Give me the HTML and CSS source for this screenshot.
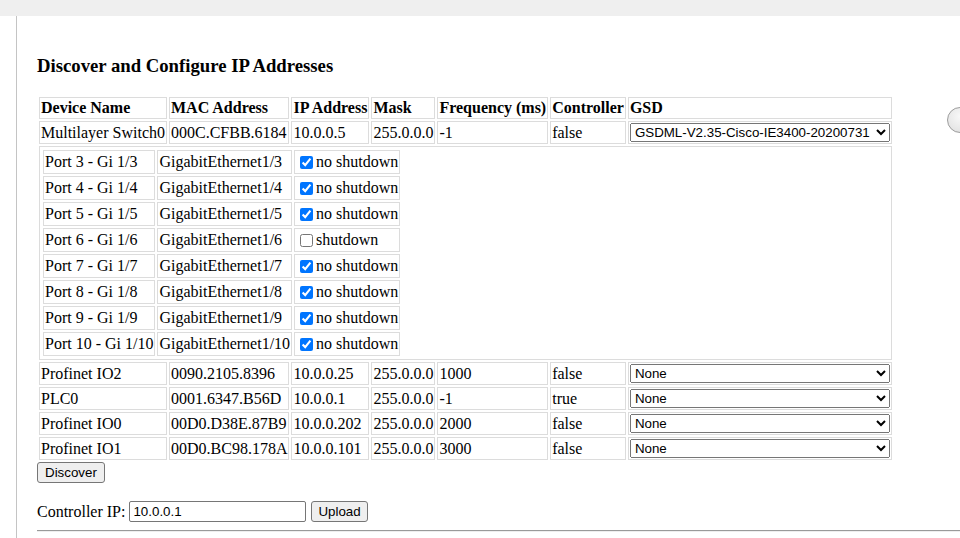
FILE: index.html
```html
<!DOCTYPE html>
<html>
<head>
<meta charset="utf-8">
<title>Discover and Configure IP Addresses</title>
<link rel="stylesheet" href="styles.css">
</head>
<body>
<div class="topbar"></div>
<div class="main">
  <h3 class="title">Discover and Configure IP Addresses</h3>
  <table class="devices">
    <tr>
      <th>Device Name</th><th>MAC Address</th><th>IP Address</th><th>Mask</th><th>Frequency (ms)</th><th>Controller</th><th>GSD</th>
    </tr>
    <tr>
      <td>Multilayer Switch0</td><td>000C.CFBB.6184</td><td>10.0.0.5</td><td>255.0.0.0</td><td>-1</td><td>false</td>
      <td><select class="gsd"><option selected>GSDML-V2.35-Cisco-IE3400-20200731</option><option>None</option></select></td>
    </tr>
    <tr>
      <td colspan="7" class="ports-cell">
        <table class="ports">
          <tr><td>Port 3 - Gi 1/3</td><td>GigabitEthernet1/3</td><td><label><input type="checkbox" checked>no shutdown</label></td></tr>
          <tr><td>Port 4 - Gi 1/4</td><td>GigabitEthernet1/4</td><td><label><input type="checkbox" checked>no shutdown</label></td></tr>
          <tr><td>Port 5 - Gi 1/5</td><td>GigabitEthernet1/5</td><td><label><input type="checkbox" checked>no shutdown</label></td></tr>
          <tr><td>Port 6 - Gi 1/6</td><td>GigabitEthernet1/6</td><td><label><input type="checkbox">shutdown</label></td></tr>
          <tr><td>Port 7 - Gi 1/7</td><td>GigabitEthernet1/7</td><td><label><input type="checkbox" checked>no shutdown</label></td></tr>
          <tr><td>Port 8 - Gi 1/8</td><td>GigabitEthernet1/8</td><td><label><input type="checkbox" checked>no shutdown</label></td></tr>
          <tr><td>Port 9 - Gi 1/9</td><td>GigabitEthernet1/9</td><td><label><input type="checkbox" checked>no shutdown</label></td></tr>
          <tr><td>Port 10 - Gi 1/10</td><td>GigabitEthernet1/10</td><td><label><input type="checkbox" checked>no shutdown</label></td></tr>
        </table>
      </td>
    </tr>
    <tr>
      <td>Profinet IO2</td><td>0090.2105.8396</td><td>10.0.0.25</td><td>255.0.0.0</td><td>1000</td><td>false</td>
      <td><select class="gsd"><option selected>None</option><option>GSDML-V2.35-Cisco-IE3400-20200731</option></select></td>
    </tr>
    <tr>
      <td>PLC0</td><td>0001.6347.B56D</td><td>10.0.0.1</td><td>255.0.0.0</td><td>-1</td><td>true</td>
      <td><select class="gsd"><option selected>None</option><option>GSDML-V2.35-Cisco-IE3400-20200731</option></select></td>
    </tr>
    <tr>
      <td>Profinet IO0</td><td>00D0.D38E.87B9</td><td>10.0.0.202</td><td>255.0.0.0</td><td>2000</td><td>false</td>
      <td><select class="gsd"><option selected>None</option><option>GSDML-V2.35-Cisco-IE3400-20200731</option></select></td>
    </tr>
    <tr>
      <td>Profinet IO1</td><td>00D0.BC98.178A</td><td>10.0.0.101</td><td>255.0.0.0</td><td>3000</td><td>false</td>
      <td><select class="gsd"><option selected>None</option><option>GSDML-V2.35-Cisco-IE3400-20200731</option></select></td>
    </tr>
  </table>
  <div class="actions"><button class="btn discover">Discover</button></div>
  <div class="ctrl">
    <span class="ctrl-label">Controller IP:</span>
    <input class="ip" type="text" value="10.0.0.1">
    <button class="btn upload">Upload</button>
  </div>
  <hr class="rule">
</div>
<div class="round-btn"></div>
</body>
</html>
```

FILE: styles.css
```css
html, body {
  overflow: hidden;
}
body {
  margin: 0;
  font-family: "Liberation Serif", "Times New Roman", serif;
  font-size: 16px;
  color: #000;
  background: #fff;
}
.topbar {
  height: 16px;
  background: #efefef;
}
.main {
  margin-left: 16px;
  border-left: 1px solid #c4c4c4;
  padding-left: 20px;
  padding-top: 20px;
  box-sizing: border-box;
  min-height: calc(100vh - 16px);
}
.title {
  font-size: 18.72px;
  font-weight: bold;
  margin: 18.72px 0;
}
.devices {
  border-spacing: 2px;
}
.devices th,
.devices td {
  border: 1px solid #dcdcdc;
  padding: 1px;
  text-align: left;
  white-space: nowrap;
}
.devices th {
  font-weight: bold;
}
.ports {
  border-spacing: 2px;
}
.ports td {
  padding: 1px;
  height: 20px;
}
.ports label {
  white-space: nowrap;
}
.ports input {
  width: 13px;
  height: 13px;
  margin: 3px 3px 3px 4px;
  vertical-align: -2px;
}
.gsd {
  display: block;
  width: 260px;
  height: 19px;
  margin: 0;
  font-family: "Liberation Sans", Arial, sans-serif;
  font-size: 13.33px;
  color: #000;
}
.actions {
  height: 22px;
}
.btn {
  font-family: "Liberation Sans", Arial, sans-serif;
  font-size: 13.33px;
  height: 21px;
  padding: 1px 6px;
  background: #efefef;
  border: 1px solid #767676;
  border-radius: 3px;
  color: #000;
}
.discover {
  padding: 1px 7px;
}
.ctrl {
  display: flex;
  align-items: center;
  margin-top: 17px;
}
.ip {
  margin-left: 4px;
  width: 177px;
  height: 21px;
  box-sizing: border-box;
  padding: 1px 3px;
  border: 1px solid #767676;
  border-radius: 2px;
  font-family: "Liberation Sans", Arial, sans-serif;
  font-size: 13.33px;
}
.upload {
  margin-left: 5px;
}
.rule {
  margin: 8px 0 0;
  border: 0;
  border-top: 1px solid #9a9a9a;
  border-bottom: 1px solid #eeeeee;
}
.round-btn {
  position: absolute;
  top: 107px;
  left: 947px;
  width: 24px;
  height: 24px;
  border-radius: 50%;
  border: 1px solid #9c9c9c;
  background: radial-gradient(circle at 50% 35%, #f8f8f8 0%, #e6e6e6 70%, #d4d4d4 100%);
}
```
